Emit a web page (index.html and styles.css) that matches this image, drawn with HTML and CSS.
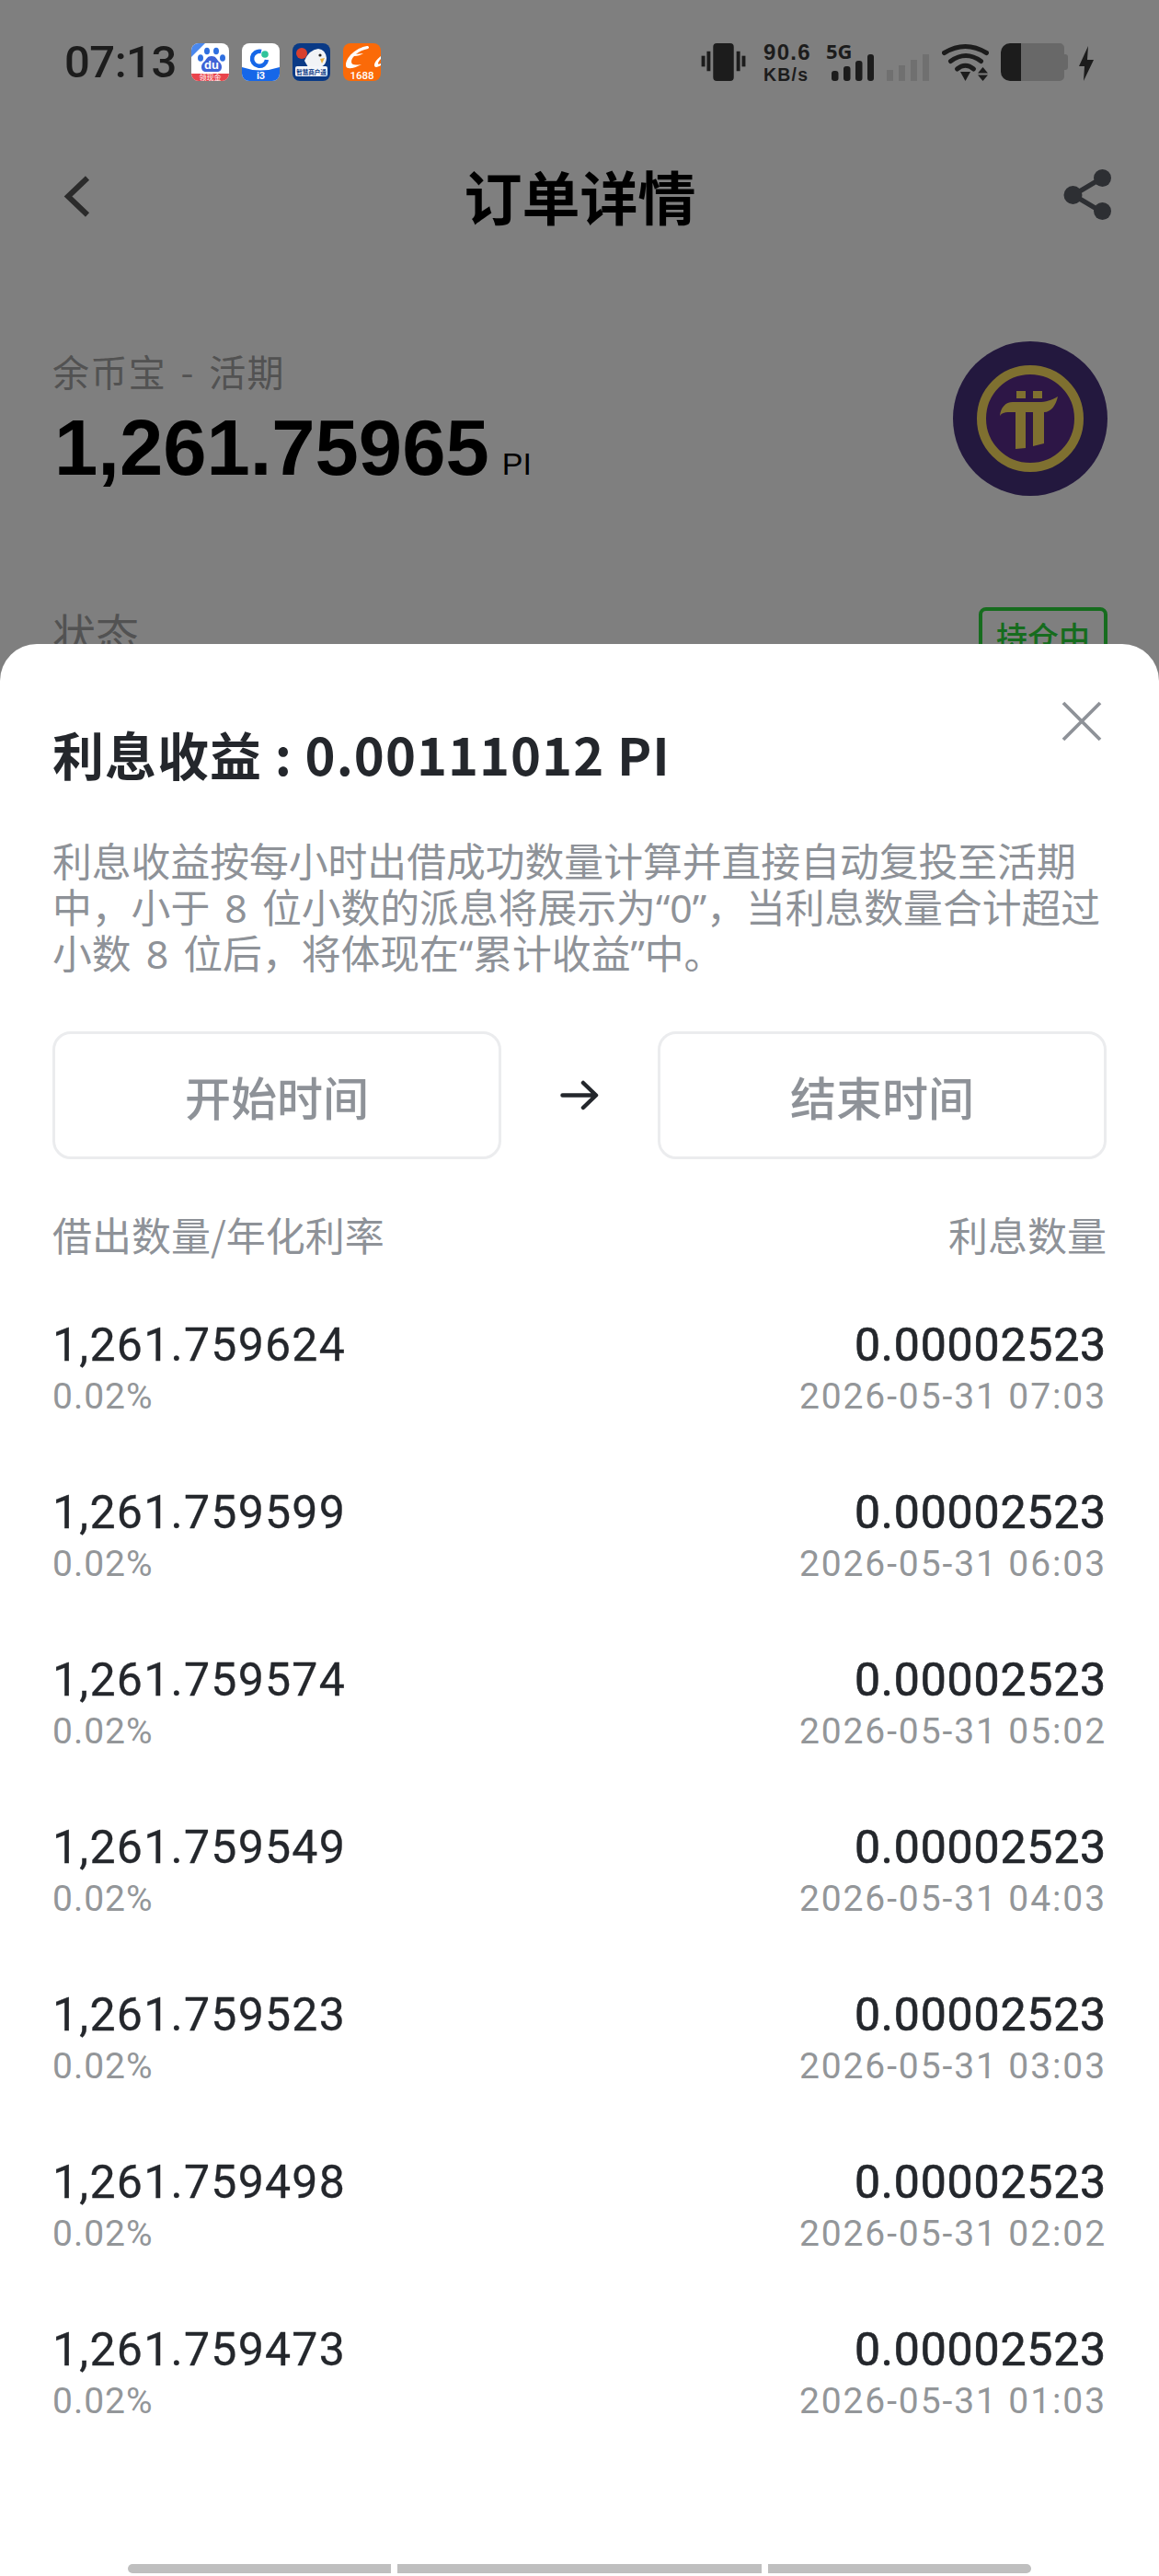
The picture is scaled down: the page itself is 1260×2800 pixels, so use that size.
FILE: index.html
```html
<!DOCTYPE html>
<html lang="zh">
<head>
<meta charset="utf-8">
<title>订单详情</title>
<link rel="stylesheet" href="styles.css">
</head>
<body>
<div class="page">
  <div class="statusbar">
    <div class="status-left">
      <span class="time">07:13</span>
      <div class="apps">
        <svg class="app" viewBox="0 0 41 41"><defs><clipPath id="c1"><rect width="41" height="41" rx="8"/></clipPath></defs><g clip-path="url(#c1)"><rect width="41" height="41" fill="#fff"/><rect y="33" width="41" height="8" fill="#e9444c"/><path d="M0 0h15L0 15z" fill="#4a88ee"/></g><ellipse cx="10" cy="16" rx="3" ry="3.800" fill="#2f6fe0"/><ellipse cx="17" cy="8.500" rx="3" ry="3.800" fill="#2f6fe0"/><ellipse cx="27" cy="8.500" rx="3" ry="3.800" fill="#2f6fe0"/><ellipse cx="34" cy="16" rx="3" ry="3.800" fill="#2f6fe0"/><path d="M22 14c-5 0-5 3-8 6-2 2-3 3-3 6 0 3 2 5 5 5h12c3 0 5-2 5-5 0-3-1-4-3-6-3-3-3-6-8-6z" fill="#3f63d6"/><text x="22" y="28" class="t-du">du</text><text x="20.500" y="40" class="t-tiny">领现金</text></svg>
        <svg class="app" viewBox="0 0 41 41"><defs><clipPath id="c2"><rect width="41" height="41" rx="8"/></clipPath></defs><g clip-path="url(#c2)"><rect width="41" height="41" fill="#fff"/><path d="M0 26q20 7 41 0v15H0z" fill="#1667e8"/></g><path d="M27 18a8 8 0 1 1-6-9" fill="none" stroke="#1667e8" stroke-width="4.500"/><circle cx="25" cy="12" r="3.800" fill="#2fc39b"/><text x="20.500" y="39" class="t-i3">i3</text></svg>
        <svg class="app" viewBox="0 0 41 41"><rect width="41" height="41" rx="8" fill="#0a3a86"/><circle cx="10" cy="11" r="6" fill="#d8402f"/><path d="M13 19q5-12 15-13 8 1 9 10 0 7-6 10H17z" fill="#f1f3f6"/><circle cx="30" cy="13" r="1.600" fill="#222"/><path d="M30 17l5-1-3 6z" fill="#e9b03f"/><rect x="3" y="25" width="35" height="11" rx="2" fill="#f4f6fa"/><text x="20.500" y="33.500" class="t-shop">智慧商户通</text></svg>
        <svg class="app" viewBox="0 0 41 41"><rect width="41" height="41" rx="8" fill="#fb6a08"/><path d="M26 3C14 5 3 15 3 24c0 5 8 4 17-1-7 1-11 1-11-3 0-2 1-4 3-6 4 0 7-1 10-3-3 0-6 1-8 1 3-3 8-5 13-6 2-1 1-3-1-3zM41 14c-4 3-7 7-7 10 0 3 4 2 7 0v-2c-2 1-3 1-3 0 0-1 1-3 3-5z" fill="#fff"/><text x="20.500" y="38.500" class="t-1688">1688</text></svg>
      </div>
    </div>
    <div class="status-right">
      <svg class="ic-vibrate" viewBox="0 0 50 42"><rect x="13" y="0" width="23" height="42" rx="4" fill="#1c1c1c"/><rect x="0" y="14" width="4" height="12" fill="#1c1c1c"/><rect x="6" y="9" width="4" height="22" fill="#1c1c1c"/><rect x="39" y="9" width="4" height="22" fill="#1c1c1c"/><rect x="45" y="14" width="4" height="12" fill="#1c1c1c"/></svg>
      <div class="speed"><span class="speed-num">90.6</span><span class="speed-unit">KB/s</span></div>
      <div class="sig5g">
        <span class="fiveg">5G</span>
        <svg class="ic-bars" viewBox="0 0 46 29"><rect x="0" y="18" width="7.500" height="11" rx="3" fill="#1c1c1c"/><rect x="13" y="13" width="7.500" height="16" rx="3" fill="#1c1c1c"/><rect x="26" y="7" width="7.500" height="22" rx="3" fill="#1c1c1c"/><rect x="39" y="0" width="7" height="29" rx="3" fill="#1c1c1c"/></svg>
      </div>
      <svg class="ic-bars2" viewBox="0 0 46 29"><rect x="0" y="17" width="7" height="12" fill="#707070"/><rect x="13" y="12" width="7" height="17" fill="#707070"/><rect x="26" y="6" width="7" height="23" fill="#707070"/><rect x="39" y="0" width="7" height="29" fill="#707070"/></svg>
      <svg class="ic-wifi" viewBox="0 0 51 41"><g fill="none" stroke="#1c1c1c" stroke-width="5" stroke-linecap="round"><path d="M2.500 10.500Q25.500-3.500 48.500 10.500"/><path d="M9.500 19.500Q26 7.500 42.500 19.500"/><path d="M16.500 28Q25.500 20.500 34.500 28"/></g><path d="M20 31h11l-5.500 10z" fill="#1c1c1c"/><path d="M44.500 26l5.500 6.500H39zM44.500 41l5.500-6.500H39z" fill="#1c1c1c"/></svg>
      <svg class="ic-batt" viewBox="0 0 73 41"><path d="M10 0h54a5 5 0 0 1 5 5v7h1a3 3 0 0 1 3 3v11a3 3 0 0 1-3 3h-1v7a5 5 0 0 1-5 5H10z" fill="#686868"/><path d="M22 0H10A10 10 0 0 0 0 10v21a10 10 0 0 0 10 10h12z" fill="#1c1c1c"/></svg>
      <svg class="ic-bolt" viewBox="0 0 16 38"><path d="M10 0L0 22h6L5 38l11-23H9z" fill="#1c1c1c"/></svg>
    </div>
  </div>

  <header class="nav">
    <svg class="ic-back" viewBox="0 0 29 45"><path d="M26 2.500L5 22.500l21 20" fill="none" stroke="#565656" stroke-width="6"/></svg>
    <h1 class="nav-title">订单详情</h1>
    <svg class="ic-share" viewBox="0 0 53 55"><path d="M42 9.500L11 28l31 18.500" fill="none" stroke="#5a5e66" stroke-width="5.500"/><circle cx="42.500" cy="9.500" r="9.500" fill="#5a5e66"/><circle cx="10.500" cy="28" r="10" fill="#5a5e66"/><circle cx="42.500" cy="45.500" r="9.500" fill="#5a5e66"/></svg>
  </header>

  <section class="summary">
    <div class="summary-text">
      <div class="product">余币宝 - 活期</div>
      <div class="amount"><span class="amount-num">1,261.75965</span><span class="amount-unit">PI</span></div>
    </div>
    <svg class="coin" viewBox="0 0 168 168"><circle cx="84" cy="84" r="84" fill="#46307c"/><circle cx="84" cy="84" r="50" fill="#5a2c8c"/><circle cx="84" cy="84" r="53" fill="none" stroke="#ffe060" stroke-width="10"/><path d="M69 54h10v8H69zM87 54h10v8H87zM51 81c1-9 6-15 14-15h28c8 0 14-2 21-6-2 9-7 17-15 17v34l-12 3V77h-8v39l-11 1V77h-8c-4 0-7 1-9 4z" fill="#ffe060"/></svg>
  </section>

  <section class="status-row">
    <span class="status-label">状态</span>
    <span class="status-tag">持仓中</span>
  </section>

  <div class="scrim"></div>

  <section class="sheet">
    <svg class="ic-close" viewBox="0 0 44 44"><path d="M2 2l40 40M42 2L2 42" fill="none" stroke="#8e9298" stroke-width="3.800"/></svg>
    <h2 class="sheet-title">利息收益 : 0.00111012 PI</h2>
    <p class="sheet-desc">利息收益按每小时出借成功数量计算并直接自动复投至活期中，小于 8 位小数的派息将展示为“0”，当利息数量合计超过小数 8 位后，将体现在“累计收益”中。</p>
    <div class="range">
      <div class="range-box">开始时间</div>
      <svg class="ic-arrow" viewBox="0 0 42 33"><path d="M2.500 16.500h36M25 3l14 13.500L25 30" fill="none" stroke="#24272c" stroke-width="4.500" stroke-linecap="round" stroke-linejoin="round"/></svg>
      <div class="range-box">结束时间</div>
    </div>
    <div class="table-head"><span>借出数量/年化利率</span><span>利息数量</span></div>
    <div class="rows">
      <div class="row"><div class="cell"><span class="val">1,261.759624</span><span class="sub">0.02%</span></div><div class="cell cell-r"><span class="val-r">0.00002523</span><span class="sub sub-r">2026-05-31 07:03</span></div></div>
      <div class="row"><div class="cell"><span class="val">1,261.759599</span><span class="sub">0.02%</span></div><div class="cell cell-r"><span class="val-r">0.00002523</span><span class="sub sub-r">2026-05-31 06:03</span></div></div>
      <div class="row"><div class="cell"><span class="val">1,261.759574</span><span class="sub">0.02%</span></div><div class="cell cell-r"><span class="val-r">0.00002523</span><span class="sub sub-r">2026-05-31 05:02</span></div></div>
      <div class="row"><div class="cell"><span class="val">1,261.759549</span><span class="sub">0.02%</span></div><div class="cell cell-r"><span class="val-r">0.00002523</span><span class="sub sub-r">2026-05-31 04:03</span></div></div>
      <div class="row"><div class="cell"><span class="val">1,261.759523</span><span class="sub">0.02%</span></div><div class="cell cell-r"><span class="val-r">0.00002523</span><span class="sub sub-r">2026-05-31 03:03</span></div></div>
      <div class="row"><div class="cell"><span class="val">1,261.759498</span><span class="sub">0.02%</span></div><div class="cell cell-r"><span class="val-r">0.00002523</span><span class="sub sub-r">2026-05-31 02:02</span></div></div>
      <div class="row"><div class="cell"><span class="val">1,261.759473</span><span class="sub">0.02%</span></div><div class="cell cell-r"><span class="val-r">0.00002523</span><span class="sub sub-r">2026-05-31 01:03</span></div></div>
    </div>
    <div class="gesture"><span class="g1"></span><span class="g2"></span><span class="g3"></span></div>
  </section>
</div>
</body>
</html>
```

FILE: styles.css
```css
* { box-sizing: border-box; }
html, body { margin: 0; padding: 0; }
body { width: 1260px; height: 2800px; overflow: hidden; background: #fff; font-family: "Noto Sans CJK SC", "Noto Sans", sans-serif; }
.page { position: relative; width: 1260px; height: 2800px; overflow: hidden; background: #fff; padding-top: 47px; }

/* status bar sits above the dimming scrim */
.statusbar { position: relative; z-index: 2; display: flex; justify-content: space-between; align-items: center; height: 41px; padding: 0 71px 0 70px; }
.status-left { display: flex; align-items: center; }
.time { font-family: Roboto, sans-serif; font-size: 49px; font-weight: 500; color: #1c1c1c; width: 138px; letter-spacing: -0.5px; line-height: 41px; }
.apps { display: flex; gap: 14px; }
.app { width: 41px; height: 41px; display: block; }
.t-du { font-family: "Liberation Sans", sans-serif; font-weight: 700; font-size: 13px; fill: #fff; text-anchor: middle; }
.t-tiny { font-family: "Noto Sans CJK SC", sans-serif; font-size: 8px; fill: #fff; text-anchor: middle; }
.t-i3 { font-family: Roboto, sans-serif; font-weight: 700; font-size: 11px; fill: #fff; text-anchor: middle; }
.t-shop { font-family: "Noto Sans CJK SC", sans-serif; font-weight: 700; font-size: 6.500px; fill: #0a3a86; text-anchor: middle; }
.t-1688 { font-family: Roboto, sans-serif; font-weight: 500; font-size: 11.500px; fill: #fff; text-anchor: middle; }
.status-right { display: flex; align-items: flex-start; }
.ic-vibrate { width: 50px; height: 41px; margin-right: 18px; }
.speed { display: flex; flex-direction: column; align-items: flex-start; width: 52px; margin-right: 19px; font-family: "Liberation Sans", sans-serif; font-weight: 700; color: #1c1c1c; }
.speed-num { font-size: 24px; line-height: 24px; margin-top: -2px; letter-spacing: 1.300px; }
.speed-unit { font-size: 19.500px; line-height: 16px; margin-top: 4px; letter-spacing: 1.200px; }
.sig5g { position: relative; width: 46px; height: 41px; margin-right: 17px; }
.fiveg { position: absolute; left: -3px; top: 0; font-family: "Noto Sans", sans-serif; font-weight: 700; font-size: 22px; line-height: 17px; color: #1c1c1c; }
.ic-bars { position: absolute; left: 3px; bottom: 0; width: 46px; height: 29px; }
.ic-bars2 { width: 46px; height: 29px; margin-top: 12px; margin-right: 14px; }
.ic-wifi { width: 51px; height: 41px; margin-right: 13px; }
.ic-batt { width: 73px; height: 41px; margin-right: 12px; }
.ic-bolt { width: 16px; height: 38px; margin-top: 3px; }

.nav { display: grid; grid-template-columns: 1fr auto 1fr; align-items: start; height: 60px; margin-top: 97px; padding: 0 51px 0 52px; }
.nav-title { margin: 0; font-size: 63px; line-height: 54px; font-weight: 700; color: #000; }
.ic-back { width: 29px; height: 45px; margin: 6px 0 0 17px; }
.ic-share { width: 53px; height: 55px; justify-self: end; margin-top: -1px; }

.summary { display: flex; justify-content: space-between; align-items: flex-start; padding: 0 56px 0 57px; margin-top: 126px; }
.summary-text { display: flex; flex-direction: column; }
.product { font-size: 40px; line-height: 64px; color: #a4a4a4; letter-spacing: 1.400px; word-spacing: 5px; }
.amount { display: flex; align-items: baseline; margin-top: 7px; }
.amount-num { font-family: "Liberation Sans", sans-serif; font-weight: 700; font-size: 85px; line-height: 90px; color: #000; margin-left: 2px; }
.amount-unit { font-family: "Liberation Sans", sans-serif; font-size: 34px; color: #000; margin-left: 14px; }
.coin { width: 168px; height: 168px; }

.status-row { display: flex; justify-content: space-between; align-items: flex-start; padding: 0 56px 0 57px; margin-top: 113px; }
.status-label { font-size: 47px; line-height: 70px; color: #a4a4a4; }
.status-tag { border: 4px solid #2cd83c; border-radius: 8px; color: #2cd83c; font-size: 34px; font-weight: 500; padding: 4px 15px; line-height: 48px; margin-top: 8px; }

.scrim { position: absolute; inset: 0; z-index: 1; background: rgba(0,0,0,.5); }

.sheet { position: absolute; z-index: 2; left: 0; right: 0; top: 700px; bottom: 0; background: #fff; border-radius: 40px 40px 0 0; padding: 0 57px; display: flex; flex-direction: column; }
.ic-close { position: absolute; right: 62px; top: 62px; width: 44px; height: 44px; }
.sheet-title { margin: 84px 0 0; font-size: 56px; line-height: 70px; font-weight: 700; color: #24272c; letter-spacing: 1px; }
.sheet-desc { margin: 58px 0 0; font-family: "Noto Sans", "Noto Sans CJK SC", sans-serif; font-size: 42.800px; line-height: 50px; color: #8e9298; word-spacing: 5px; }
.range { display: flex; justify-content: space-between; align-items: center; margin-top: 59px; }
.range-box { width: 488px; height: 139px; border: 3px solid #ebecee; border-radius: 20px; display: flex; align-items: center; justify-content: center; font-size: 50px; font-weight: 500; color: #8e9298; }
.ic-arrow { width: 42px; height: 33px; }
.table-head { display: flex; justify-content: space-between; margin-top: 51px; font-size: 43px; line-height: 60px; color: #8e9298; }
.rows { display: flex; flex-direction: column; margin-top: 60px; }
.row { display: flex; justify-content: space-between; height: 182px; }
.cell { display: flex; flex-direction: column; align-items: flex-start; }
.cell-r { align-items: flex-end; }
.val { font-family: Roboto, sans-serif; font-size: 50px; line-height: 62px; color: #24272c; letter-spacing: 1.250px; -webkit-text-stroke: 0.300px #24272c; }
.val-r { font-family: Roboto, sans-serif; font-size: 50px; line-height: 62px; color: #24272c; letter-spacing: 0.800px; -webkit-text-stroke: 0.700px #24272c; }
.sub { font-family: Roboto, sans-serif; font-size: 39px; line-height: 46px; margin-top: 2px; color: #939699; letter-spacing: 1px; }
.sub-r { letter-spacing: 1.900px; }
.gesture { position: absolute; left: 139px; bottom: 3px; display: flex; gap: 7px; height: 10px; }
.gesture span { display: block; background: #bfbfbf; height: 10px; }
.g1 { width: 286px; border-radius: 5px 0 0 5px; }
.g2 { width: 396px; }
.g3 { width: 286px; border-radius: 0 5px 5px 0; }
```
